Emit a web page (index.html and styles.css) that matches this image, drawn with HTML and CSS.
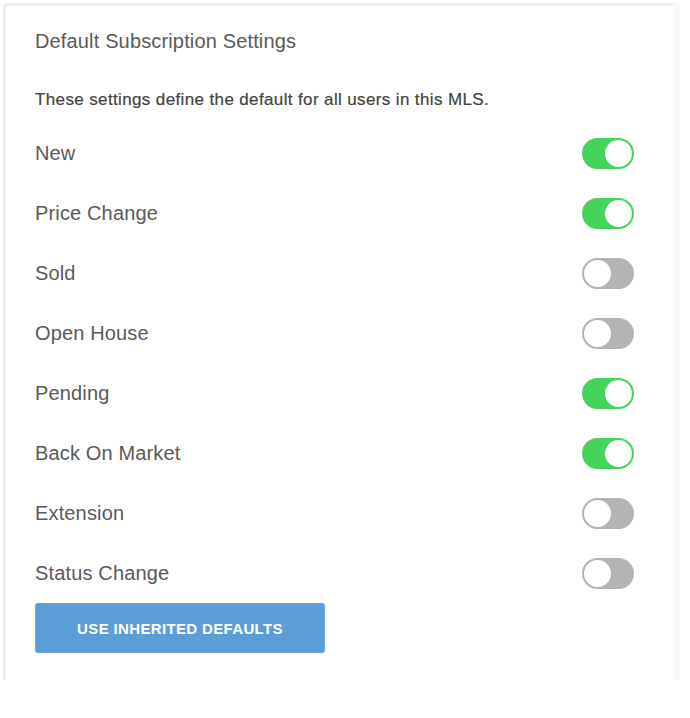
FILE: index.html
```html
<!DOCTYPE html>
<html>
<head>
<meta charset="utf-8">
<link rel="stylesheet" href="styles.css">
</head>
<body>
<div class="frame">
  <div class="card">
    <h1 class="title">Default Subscription Settings</h1>
    <p class="subtitle">These settings define the default for all users in this MLS.</p>
    <div class="rows">
      <div class="row"><span class="label">New</span><span class="toggle on"><span class="knob"></span></span></div>
      <div class="row"><span class="label">Price Change</span><span class="toggle on"><span class="knob"></span></span></div>
      <div class="row"><span class="label">Sold</span><span class="toggle"><span class="knob"></span></span></div>
      <div class="row"><span class="label">Open House</span><span class="toggle"><span class="knob"></span></span></div>
      <div class="row"><span class="label">Pending</span><span class="toggle on"><span class="knob"></span></span></div>
      <div class="row"><span class="label">Back On Market</span><span class="toggle on"><span class="knob"></span></span></div>
      <div class="row"><span class="label">Extension</span><span class="toggle"><span class="knob"></span></span></div>
      <div class="row"><span class="label">Status Change</span><span class="toggle"><span class="knob"></span></span></div>
    </div>
    <button class="btn">USE INHERITED DEFAULTS</button>
  </div>
</div>
</body>
</html>
```
FILE: styles.css
```css
html, body {
  margin: 0;
  padding: 0;
  background: #ffffff;
}
body {
  font-family: "Liberation Sans", Arial, sans-serif;
  color: #555555;
}
.frame {
  margin: 3px 0 0 3px;
  width: 677px;
  background: #f9f9f9;
}
.card {
  width: 670px;
  box-sizing: border-box;
  background: #ffffff;
  border-top: 3px solid #ededed;
  border-left: 3px solid #ededed;
  border-top-left-radius: 4px;
  padding: 23px 39px 27px 29px;
}
.title {
  margin: 0;
  font-size: 20px;
  font-weight: normal;
  line-height: 24px;
  letter-spacing: 0.15px;
  color: #5a5a5a;
}
.subtitle {
  margin: 37px 0 0 0;
  font-size: 17px;
  line-height: 20px;
  letter-spacing: 0.37px;
  color: #444444;
  -webkit-text-stroke: 0.2px #444444;
}
.rows {
  margin-top: 13px;
  display: flex;
  flex-direction: column;
}
.row {
  height: 60px;
  display: flex;
  align-items: center;
  justify-content: space-between;
}
.label {
  font-size: 20px;
  letter-spacing: 0.15px;
  color: #5a5a5a;
}
.toggle {
  width: 52px;
  height: 31px;
  border-radius: 16px;
  background: #b4b4b4;
  box-sizing: border-box;
  padding: 2px;
  display: flex;
  justify-content: flex-start;
}
.toggle.on {
  background: #44d45b;
  justify-content: flex-end;
}
.knob {
  width: 27px;
  height: 27px;
  border-radius: 50%;
  background: #ffffff;
}
.btn {
  display: block;
  width: 290px;
  height: 50px;
  margin: 0;
  border: 1px solid #6aa7de;
  border-radius: 3px;
  background: #5b9dd8;
  color: #ffffff;
  font-family: "Liberation Sans", Arial, sans-serif;
  font-size: 15px;
  font-weight: bold;
  letter-spacing: 0.35px;
  cursor: pointer;
}
```
